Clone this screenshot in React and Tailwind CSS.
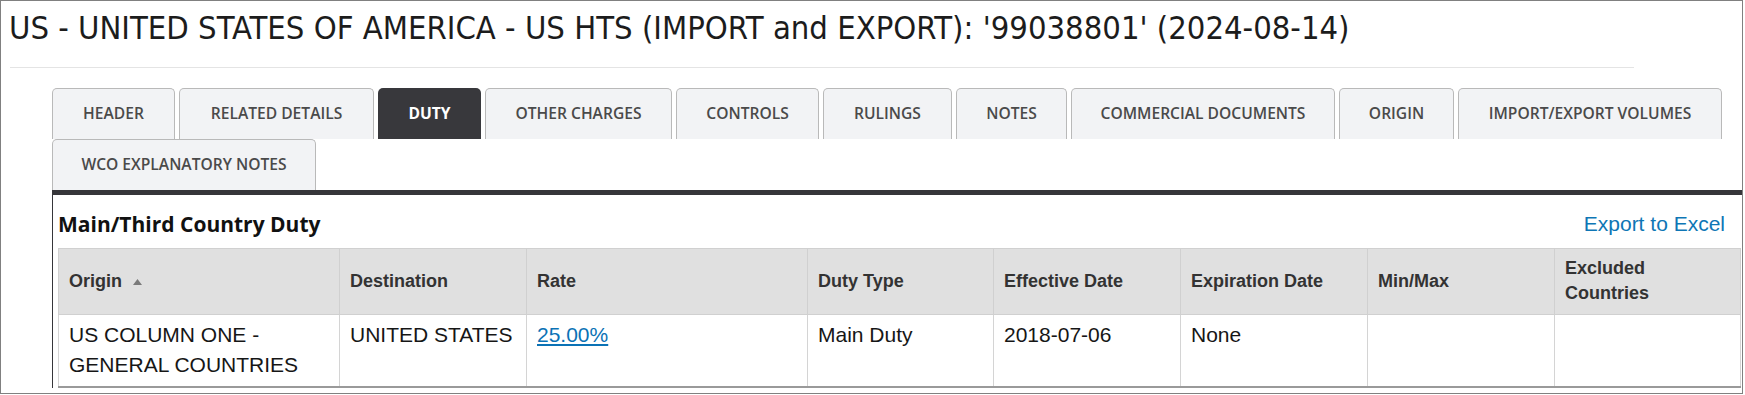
import React from "react";

const tabs = [
  { label: "HEADER", w: "w-[123px]" },
  { label: "RELATED DETAILS", w: "w-[195px]" },
  { label: "DUTY", w: "w-[103px]", active: true },
  { label: "OTHER CHARGES", w: "w-[187px]" },
  { label: "CONTROLS", w: "w-[143px]" },
  { label: "RULINGS", w: "w-[129px]" },
  { label: "NOTES", w: "w-[111px]" },
  { label: "COMMERCIAL DOCUMENTS", w: "w-[264px]" },
  { label: "ORIGIN", w: "w-[115px]" },
  { label: "IMPORT/EXPORT VOLUMES", w: "w-[264px]" },
  { label: "WCO EXPLANATORY NOTES", w: "w-[264px]" },
];

const cols = [
  { label: "Origin", w: "w-[281px]", sort: true },
  { label: "Destination", w: "w-[187px]" },
  { label: "Rate", w: "w-[281px]" },
  { label: "Duty Type", w: "w-[186px]" },
  { label: "Effective Date", w: "w-[187px]" },
  { label: "Expiration Date", w: "w-[187px]" },
  { label: "Min/Max", w: "w-[187px]" },
  { label: "Excluded Countries", w: "w-[186px]" },
];

function Tab({ t }) {
  return (
    <div
      className={
        t.w +
        " h-[51px] flex items-center justify-center rounded-t-[5px] text-[15.6px] font-['Open_Sans',sans-serif] " +
        (t.active
          ? "bg-[#38383c] text-white font-bold"
          : "bg-[#f2f3f5] text-[#4a4a4a] font-semibold border-t border-x border-[#b9b9b9]")
      }
    >
      {t.label}
    </div>
  );
}

export default function App() {
  const td =
    "border-x border-[#d4d4d4] border-b-2 border-b-[#9a9a9a] px-[10px] pt-[5px] pb-[6px] align-top";
  return (
    <div className="w-[1743px] h-[394px] border border-[#808080] overflow-hidden bg-white">
      <h1 className="pl-[8px] pt-[9px] text-[32.5px] leading-[37px] font-normal text-[#1c1c1c] whitespace-nowrap font-['Liberation_Sans_Narrow','DejaVu_Sans_Condensed',Roboto,sans-serif]">
        US - UNITED STATES OF AMERICA - US HTS (IMPORT and EXPORT): '99038801' (2024-08-14)
      </h1>
      <div className="ml-[9px] mt-[20px] w-[1624px] h-px bg-[#e4e4e4]" />
      <div className="ml-[51px] mt-[20px] w-[1700px]">
        <div className="flex flex-wrap gap-x-[4px]">
          {tabs.map((t) => (
            <Tab key={t.label} t={t} />
          ))}
        </div>
        <div className="border-t-[5px] border-l border-[#36363a] pl-[5px]">
          <div className="w-[1682px] flex items-center justify-between pt-[17px] pb-[12px] pr-[15px]">
            <div className="text-[21px] leading-[24px] font-bold text-[#111] font-['Open_Sans',sans-serif]">
              Main/Third Country Duty
            </div>
            <a className="text-[21px] leading-[24px] text-[#0e76b5] font-['Liberation_Sans',Arial,sans-serif] cursor-pointer">
              Export to Excel
            </a>
          </div>
          <table className="table-fixed border-collapse w-[1682px] font-['Liberation_Sans',Arial,sans-serif]">
            <colgroup>
              {cols.map((c) => (
                <col key={c.label} className={c.w} />
              ))}
            </colgroup>
            <thead>
              <tr>
                {cols.map((c) => (
                  <th
                    key={c.label}
                    className="bg-[#e0e0e0] border border-[#d0d0d0] px-[10px] pt-[7px] pb-[8px] text-left align-middle font-bold text-[18px] leading-[25px] text-[#333]"
                  >
                    {c.label}
                    {c.sort && (
                      <svg
                        width="9"
                        height="6"
                        viewBox="0 0 9 6"
                        className="inline-block ml-[11px] align-middle"
                      >
                        <polygon points="0,6 4.5,0 9,6" fill="#7a7a7a" />
                      </svg>
                    )}
                  </th>
                ))}
              </tr>
            </thead>
            <tbody className="text-[21px] leading-[30px] text-[#161616]">
              <tr>
                <td className={td}>US COLUMN ONE - GENERAL COUNTRIES</td>
                <td className={td}>UNITED STATES</td>
                <td className={td}>
                  <a className="text-[#0b72b5] underline cursor-pointer">25.00%</a>
                </td>
                <td className={td}>Main Duty</td>
                <td className={td}>2018-07-06</td>
                <td className={td}>None</td>
                <td className={td}></td>
                <td className={td}></td>
              </tr>
            </tbody>
          </table>
        </div>
      </div>
    </div>
  );
}
